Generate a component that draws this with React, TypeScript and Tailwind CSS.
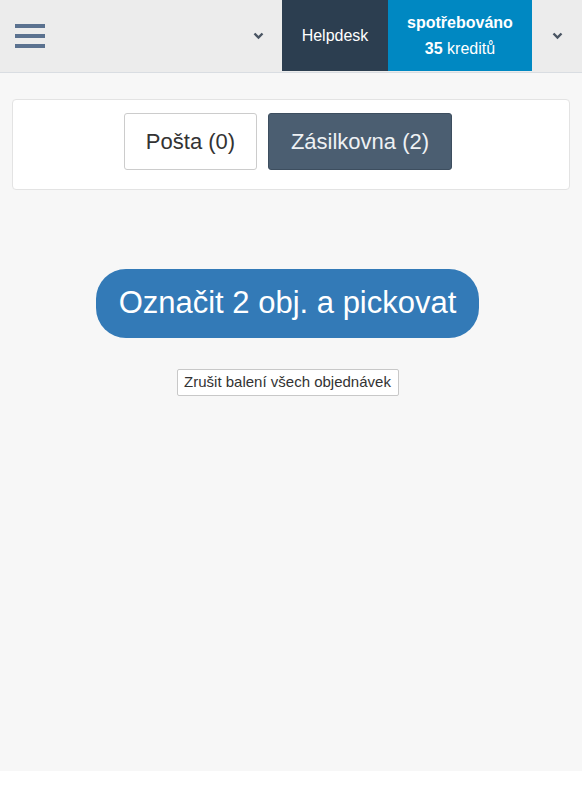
export default function App() {
  return (
    <div className="flex flex-col bg-white font-['Liberation_Sans',Arial,sans-serif]">
      <div className="flex h-[771px] flex-col bg-[#f7f7f7]">
        <header className="flex h-[73px] items-stretch border-b border-[#d9dde2] bg-[#ececec]">
          <div className="flex w-[60px] flex-col justify-center gap-[6px] pl-[15px]">
            <span className="block h-[4px] w-[30px] bg-[#5b7290]" />
            <span className="block h-[4px] w-[30px] bg-[#5b7290]" />
            <span className="block h-[4px] w-[30px] bg-[#5b7290]" />
          </div>
          <div className="flex flex-1 items-center justify-end pr-[18px]">
            <Chevron />
          </div>
          <div className="flex h-[71px] w-[106px] items-center justify-center bg-[#2c3e50] text-[16px] text-white">
            Helpdesk
          </div>
          <div className="flex h-[71px] w-[144px] flex-col items-center justify-center gap-[6px] bg-[#0088c2] text-[16px] font-bold leading-[20px] text-white">
            <span>spotřebováno</span>
            <span>
              35 <span className="font-normal">kreditů</span>
            </span>
          </div>
          <div className="flex w-[50px] items-center justify-center">
            <Chevron />
          </div>
        </header>

        <div className="px-[12px] pt-[26px]">
          <div className="flex h-[91px] items-start justify-center gap-[11px] rounded-[4px] border border-[#e3e3e3] bg-white pr-[6px] pt-[13px]">
            <button className="h-[57px] w-[133px] rounded-[3px] border border-[#cccccc] bg-white text-[22px] text-[#333]">
              Pošta (0)
            </button>
            <button className="h-[57px] w-[184px] rounded-[3px] border border-[#3d4e5f] bg-[#4b5e71] text-[22px] text-[#eef1f4]">
              Zásilkovna (2)
            </button>
          </div>
        </div>

        <div className="flex flex-col items-center pr-[7px] pt-[79px]">
          <button className="h-[69px] w-[383px] rounded-[30px] bg-[#337ab7] text-[31px] text-white">
            Označit 2 obj. a pickovat
          </button>
          <button className="mt-[31px] h-[27px] w-[222px] rounded-[2px] border border-[#c8c8c8] bg-white text-[15px] text-[#333]">
            Zrušit balení všech objednávek
          </button>
        </div>
      </div>
      <div className="h-[16px] bg-white" />
    </div>
  );
}

function Chevron() {
  return (
    <svg width="11" height="8" viewBox="0 0 11 8">
      <path d="M1.5 1.5 L5.5 5.5 L9.5 1.5" fill="none" stroke="#4a5563" strokeWidth="2.4" />
    </svg>
  );
}
